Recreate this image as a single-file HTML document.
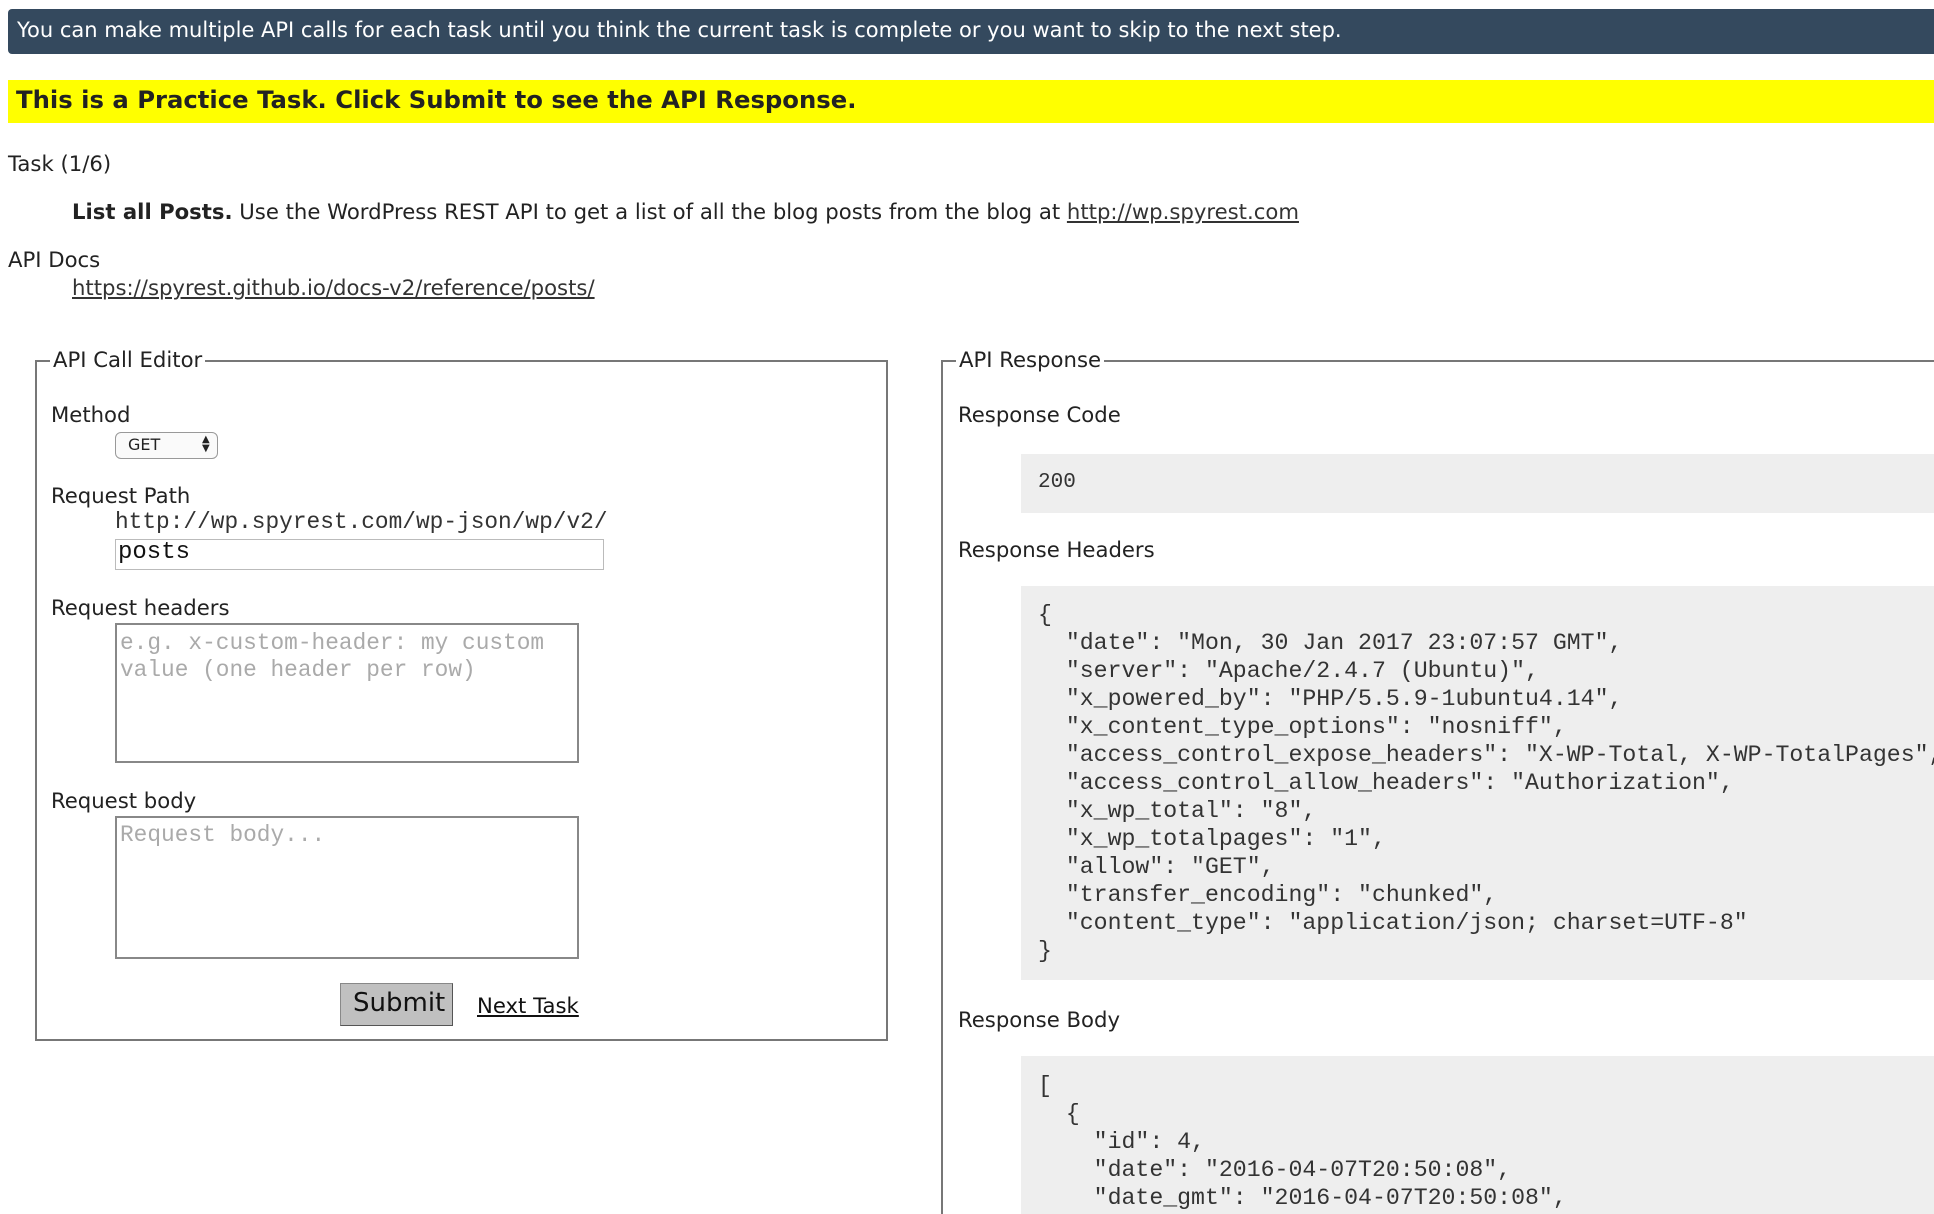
<!DOCTYPE html>
<html style="overflow:hidden;height:1214px"><head><meta charset="utf-8"><style>
body{margin:0;width:1934px;height:1214px;overflow:hidden;background:#fff;font-family:"DejaVu Sans","Liberation Sans",sans-serif;color:#222;position:relative}
.a{position:absolute;white-space:pre;line-height:1}
.s{font-size:21.2px}
.m{font-family:"Liberation Mono",monospace}
a{color:#333;text-decoration:underline}
</style></head><body>
<div class="a" style="left:8px;top:9px;width:1930px;height:45px;background:#34495e;border-radius:4px"></div>
<div class="a s" style="left:17px;top:20px;color:#fff;font-size:21px">You can make multiple API calls for each task until you think the current task is complete or you want to skip to the next step.</div>
<div class="a" style="left:8px;top:80px;width:1930px;height:43px;background:#ffff00"></div>
<div class="a" style="left:16px;top:88px;font-size:24.3px;font-weight:bold;color:#222">This is a Practice Task. Click Submit to see the API Response.</div>
<div class="a s" style="left:8px;top:153px">Task (1/6)</div>
<div class="a s" style="left:72px;top:201px"><b>List all Posts.</b> Use the WordPress REST API to get a list of all the blog posts from the blog at <a>http://wp.spyrest.com</a></div>
<div class="a s" style="left:8px;top:249px">API Docs</div>
<div class="a s" style="left:72px;top:277px"><a>https://spyrest.github.io/docs-v2/reference/posts/</a></div>

<div class="a" style="left:35px;top:360px;width:849px;height:677px;border:2px solid #777"></div>
<div class="a s" style="left:50px;top:349px;background:#fff;padding:0 3px">API Call Editor</div>
<div class="a s" style="left:51px;top:404px">Method</div>
<div class="a" style="left:115px;top:432px;width:101px;height:25px;border:1.5px solid #999;border-radius:6px;background:#fafafa"></div>
<div class="a" style="left:128px;top:437px;font-size:16px">GET</div>
<div class="a" style="left:202px;top:435px;font-size:10px;line-height:9px">▲<br>▼</div>
<div class="a s" style="left:51px;top:485px">Request Path</div>
<div class="a m" style="left:115px;top:511px;font-size:22.8px;color:#333">http://wp.spyrest.com/wp-json/wp/v2/</div>
<div class="a" style="left:115px;top:539px;width:487px;height:29px;border:1.5px solid #bbb"></div>
<div class="a m" style="left:118px;top:541px;font-size:24px;color:#111">posts</div>
<div class="a s" style="left:51px;top:597px">Request headers</div>
<div class="a" style="left:115px;top:623px;width:460px;height:136px;border:2px solid #888"></div>
<div class="a m" style="left:120px;top:630px;font-size:22.8px;color:#aaa;line-height:27px">e.g. x-custom-header: my custom
value (one header per row)</div>
<div class="a s" style="left:51px;top:790px">Request body</div>
<div class="a" style="left:115px;top:816px;width:460px;height:139px;border:2px solid #888"></div>
<div class="a m" style="left:120px;top:824px;font-size:22.8px;color:#aaa">Request body...</div>
<div class="a" style="left:340px;top:983px;width:111px;height:41px;background:#c0c0c0;border:1px solid #888;border-right-color:#555;border-bottom-color:#555"></div>
<div class="a" style="left:353px;top:990px;font-size:26px;color:#111">Submit</div>
<div class="a s" style="left:477px;top:995px;color:#111"><a style="color:#111">Next Task</a></div>

<div class="a" style="left:941px;top:360px;width:1000px;height:900px;border:2px solid #777"></div>
<div class="a s" style="left:956px;top:349px;background:#fff;padding:0 3px">API Response</div>
<div class="a s" style="left:958px;top:404px">Response Code</div>
<div class="a" style="left:1021px;top:454px;width:920px;height:59px;background:#eee"></div>
<div class="a m" style="left:1038px;top:472px;font-size:21px;color:#333">200</div>
<div class="a s" style="left:958px;top:539px">Response Headers</div>
<div class="a" style="left:1021px;top:586px;width:920px;height:394px;background:#eee"></div>
<div class="a m" style="left:1038px;top:601px;font-size:23.2px;line-height:28px;color:#333">{
  "date": "Mon, 30 Jan 2017 23:07:57 GMT",
  "server": "Apache/2.4.7 (Ubuntu)",
  "x_powered_by": "PHP/5.5.9-1ubuntu4.14",
  "x_content_type_options": "nosniff",
  "access_control_expose_headers": "X-WP-Total, X-WP-TotalPages",
  "access_control_allow_headers": "Authorization",
  "x_wp_total": "8",
  "x_wp_totalpages": "1",
  "allow": "GET",
  "transfer_encoding": "chunked",
  "content_type": "application/json; charset=UTF-8"
}</div>
<div class="a s" style="left:958px;top:1009px">Response Body</div>
<div class="a" style="left:1021px;top:1056px;width:920px;height:200px;background:#eee"></div>
<div class="a m" style="left:1038px;top:1072px;font-size:23.2px;line-height:28px;color:#333">[
  {
    "id": 4,
    "date": "2016-04-07T20:50:08",
    "date_gmt": "2016-04-07T20:50:08",</div>
</body></html>
